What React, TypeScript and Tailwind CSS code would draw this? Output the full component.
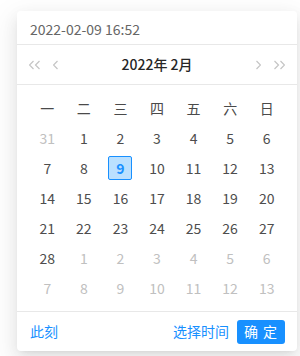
import React from "react";

const weekdays = ["一", "二", "三", "四", "五", "六", "日"];

type Cell = { d: number; cur: boolean; sel?: boolean };

function buildCells(): Cell[] {
  const cells: Cell[] = [];
  cells.push({ d: 31, cur: false });
  for (let i = 1; i <= 28; i++) cells.push({ d: i, cur: true, sel: i === 9 });
  for (let i = 1; i <= 13; i++) cells.push({ d: i, cur: false });
  return cells;
}

function Chevron({ dir, double }: { dir: "l" | "r"; double?: boolean }) {
  const one = (x: number) =>
    dir === "l" ? `M${x + 4} 1 L${x} 5 L${x + 4} 9` : `M${x} 1 L${x + 4} 5 L${x} 9`;
  return (
    <svg width={double ? 11 : 5} height={10} viewBox={double ? "0 0 11 10" : "0 0 5 10"} fill="none">
      <path d={one(0.5)} stroke="#c4c4c4" strokeWidth="1.2" />
      {double && <path d={one(6.5)} stroke="#c4c4c4" strokeWidth="1.2" />}
    </svg>
  );
}

export default function App() {
  const cells = buildCells();
  const rows: Cell[][] = [];
  for (let i = 0; i < cells.length; i += 7) rows.push(cells.slice(i, i + 7));
  return (
    <div
      className="w-[300px] h-[356px] bg-white pl-[17px] pt-[11px]"
      style={{ fontFamily: '"Noto Sans CJK SC", "Noto Sans", sans-serif' }}
    >
      <div className="w-[280px] bg-white rounded-[4px] shadow-[0_3px_6px_-4px_rgba(0,0,0,0.12),0_6px_16px_0_rgba(0,0,0,0.08),0_9px_28px_8px_rgba(0,0,0,0.05)] flex flex-col">
        <div className="h-[34px] flex items-center pl-[13px] pt-[3px] text-[14px] text-[#666666] border-b border-[#e8e8e8]">
          2022-02-09 16:52
        </div>
        <div className="h-[40px] flex items-center px-[12px] border-b border-[#e8e8e8]">
          <div className="flex items-center gap-[13px] w-[60px]">
            <Chevron dir="l" double />
            <Chevron dir="l" />
          </div>
          <div className="flex-1 text-center text-[14px] font-medium text-[#262626]">2022年 2月</div>
          <div className="flex items-center justify-end gap-[13px] w-[60px]">
            <Chevron dir="r" />
            <Chevron dir="r" double />
          </div>
        </div>
        <div className="px-[12px] py-[8px]">
          <div className="grid grid-cols-7 h-[30px] items-center text-[14px] text-[#4a4a4a]">
            {weekdays.map((w) => (
              <div key={w} className="text-center">
                {w}
              </div>
            ))}
          </div>
          {rows.map((r, ri) => (
            <div key={ri} className="grid grid-cols-7 h-[30px] items-center text-[14px]">
              {r.map((c, ci) => (
                <div key={ci} className="flex justify-center">
                  {c.sel ? (
                    <div className="w-[24px] h-[24px] flex items-center justify-center rounded-[2px] border border-[#1890ff] bg-[#bae0ff] text-[#1890ff] font-bold">
                      {c.d}
                    </div>
                  ) : (
                    <div
                      className={
                        "min-w-[24px] h-[24px] flex items-center justify-center " +
                        (c.cur ? "text-[#4d4d4d]" : "text-[#c0c0c0]")
                      }
                    >
                      {c.d}
                    </div>
                  )}
                </div>
              ))}
            </div>
          ))}
        </div>
        <div className="h-[40px] border-t border-[#e8e8e8] flex items-center px-[12px] text-[14px]">
          <span className="text-[#1890ff] ml-[1px]">此刻</span>
          <div className="flex-1" />
          <span className="text-[#1890ff] mr-[8px]">选择时间</span>
          <div className="w-[48px] h-[24px] rounded-[3px] bg-[#1890ff] text-white flex items-center justify-center text-[14px] tracking-[1px]">
            确 定
          </div>
        </div>
      </div>
    </div>
  );
}
